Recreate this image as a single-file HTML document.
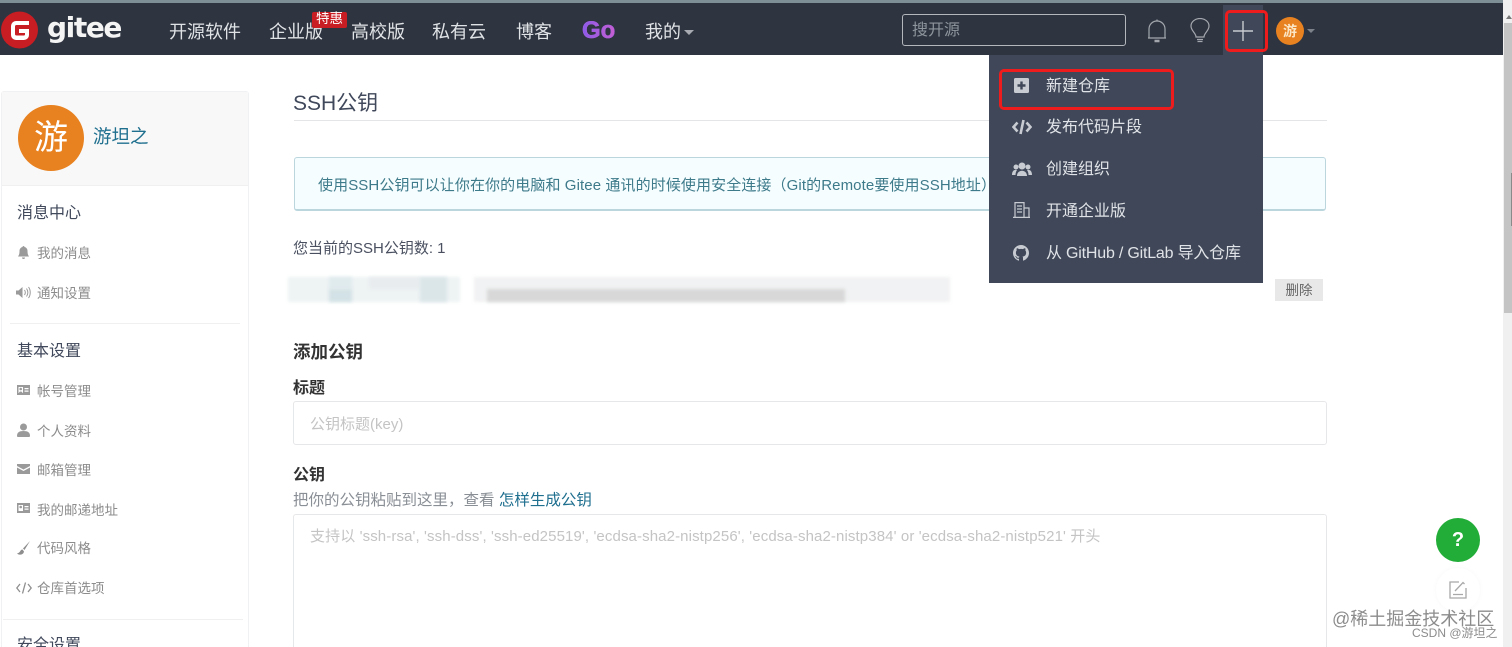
<!DOCTYPE html>
<html lang="zh"><head><meta charset="utf-8"><title>SSH公钥</title>
<style>
html,body{margin:0;padding:0;background:#fff;width:1512px;height:647px;overflow:hidden}
body{font-family:"Liberation Sans","Noto Sans CJK SC",sans-serif;color:#40485b}
#w{position:relative;width:1512px;height:647px;overflow:hidden;background:#fff}
.a{position:absolute;white-space:nowrap}
.nav{font-size:18px;line-height:24px;color:#e0e3e6;top:20px}
.dd{font-size:16px;line-height:22px;color:#e0e3e7;left:1046px}
.h{left:17px;font-size:16px;line-height:22px;color:#40485b}
.s{left:37px;font-size:13.5px;line-height:18px;color:#8c8c8c}
.ic{position:absolute}
.b{font-weight:bold;color:#333}
.bl{position:absolute;filter:blur(1.5px)}
</style></head><body><div id="w">
<div class="a" style="left:0;top:0;width:1504px;height:3px;background:#7f8f96"></div>
<div class="a" style="left:0;top:3px;width:1503px;height:52px;background:#2e3440"></div>
<div class="a" style="left:1503px;top:0;width:9px;height:647px;background:#f0f0f0"></div>
<div class="a" style="left:1504px;top:23px;width:8px;height:290px;background:#c4c4c4"></div>
<div class="a" style="left:1511px;top:173px;width:1px;height:53px;background:#8a8a8a"></div>
<div class="a" style="left:1506px;top:15px;width:0;height:0;border-left:3px solid transparent;border-right:3px solid transparent;border-bottom:4px solid #777"></div>

<svg class="ic" style="left:1px;top:11px" width="37" height="38" viewBox="0 0 37 38"><circle cx="18.5" cy="19" r="18.5" fill="#c71d23"/><path d="M10 19v-4a5 5 0 0 1 5-5h13v4H15.500a1.500 1.500 0 0 0-1.500 1.500V23a1.500 1.500 0 0 0 1.500 1.500H23a1 1 0 0 0 1-1V22h-6v-4h10v6a5 5 0 0 1-5 5h-8a5 5 0 0 1-5-5z" fill="#fff"/></svg>
<div class="a" style="left:47px;top:9px;font-size:28px;line-height:38px;font-weight:bold;color:#f4f4f4;font-family:'DejaVu Sans',sans-serif;letter-spacing:-1.4px">gitee</div>

<div class="a nav" style="left:169px">开源软件</div>
<div class="a nav" style="left:269px">企业版</div>
<div class="a" style="left:312px;top:12px;width:35px;height:16px;background:#c71d23;border-radius:2px;color:#fff;font-size:13.5px;line-height:14px;text-align:center">特惠</div>
<div class="a nav" style="left:351px">高校版</div>
<div class="a nav" style="left:432px">私有云</div>
<div class="a nav" style="left:516px">博客</div>
<div class="a" style="left:582px;top:16px;font-size:24px;line-height:30px;font-weight:bold;color:#9b5de0;background:linear-gradient(90deg,#8a5be8,#c85fd0);-webkit-background-clip:text;background-clip:text;-webkit-text-fill-color:transparent;-webkit-text-stroke:.5px #a35de0">Go</div>
<div class="a nav" style="left:645px">我的</div>
<div class="a" style="left:684px;top:30px;width:0;height:0;border-left:5px solid transparent;border-right:5px solid transparent;border-top:5px solid #a8acb2"></div>

<div class="a" style="left:902px;top:14px;width:222px;height:30px;border:1px solid #b4b8bd;border-radius:3px;color:#8f959c;font-size:16px;line-height:32px;text-indent:9px">搜开源</div>

<svg class="ic" style="left:1145px;top:18px" width="24" height="27" viewBox="0 0 24 27" fill="none" stroke="#a4a8ae" stroke-width="1.2"><path d="M4 20V11a8 8 0 0 1 16 0v9M3 20h18"/><path d="M12 1.500v2"/><path d="M9.500 23h5" stroke-width="2.5"/></svg>
<svg class="ic" style="left:1188px;top:18px" width="24" height="27" viewBox="0 0 24 27" fill="none" stroke="#a4a8ae" stroke-width="1.2"><path d="M8 19c0-4-5-6-5-11a9 7.500 0 0 1 18 0c0 5-5 7-5 11z"/><path d="M9 21.500h6M9.500 23.500h5"/></svg>

<div class="a" style="left:1223px;top:5px;width:40px;height:50px;background:#3f4758"></div>
<svg class="ic" style="left:1232px;top:20px" width="22" height="22" viewBox="0 0 22 22" stroke="#c8cbd0" stroke-width="1.4"><path d="M11 1v20M1 11h20"/></svg>
<div class="a" style="left:1276px;top:17px;width:28px;height:28px;border-radius:50%;background:#e8811f;color:#fbe6c6;font-size:14px;font-weight:bold;line-height:28px;text-align:center">游</div>
<div class="a" style="left:1307px;top:29px;width:0;height:0;border-left:4px solid transparent;border-right:4px solid transparent;border-top:4px solid #7d828a"></div>

<!-- sidebar -->
<div class="a" style="left:1px;top:91px;width:248px;height:570px;border:1px solid #f0f1f2;border-radius:3px;box-sizing:border-box;background:#fff"></div>
<div class="a" style="left:2px;top:92px;width:246px;height:93px;background:#f8f8f8;border-bottom:1px solid #f0f0f0"></div>
<div class="a" style="left:18px;top:105px;width:66px;height:66px;border-radius:50%;background:#e8811f;color:#fff;font-size:34px;line-height:66px;text-align:center">游</div>
<div class="a" style="left:93px;top:125px;font-size:18.5px;line-height:24px;color:#1f6f8f">游坦之</div>

<div class="a h" style="top:203px">消息中心</div>
<svg class="ic" style="left:17px;top:246px" width="13" height="13" viewBox="0 0 13 13" fill="#9a9a9a"><path d="M6.500 0a1 1 0 0 1 1 1c2 .5 3 2 3 4 0 3 .5 4 1.500 5.500H1C2 9 2.500 8 2.500 5c0-2 1-3.500 3-4a1 1 0 0 1 1-1zM5 11.500h3A1.500 1.500 0 0 1 5 11.500z"/></svg>
<div class="a s" style="top:245px">我的消息</div>
<svg class="ic" style="left:16px;top:286px" width="16" height="13" viewBox="0 0 16 13" fill="#9a9a9a"><path d="M0 4.500h2.500L6.500 1v11L2.500 8.500H0z"/><path d="M8.500 4c1 1.500 1 3.500 0 5M10.500 2.500c1.700 2.500 1.700 5.500 0 8M12.500 1c2.300 3 2.300 8 0 11" fill="none" stroke="#9a9a9a"/></svg>
<div class="a s" style="top:285px">通知设置</div>
<div class="a" style="left:10px;top:323px;width:230px;height:1px;background:#f0f0f0"></div>

<div class="a h" style="top:341px">基本设置</div>
<svg class="ic" style="left:17px;top:385px" width="13" height="11" viewBox="0 0 13 11"><path fill-rule="evenodd" d="M0 0h13v10H0zM1.500 2v6h4.500V2zM7.500 3v1.200h4V3zM7.500 5.500v1.200h4V5.500z" fill="#9a9a9a"/><circle cx="3.700" cy="4" r="1.300" fill="#9a9a9a"/><path d="M2 8c0-2 3.500-2 3.500 0z" fill="#9a9a9a"/></svg>
<div class="a s" style="top:383px">帐号管理</div>
<svg class="ic" style="left:17px;top:423px" width="13" height="14" viewBox="0 0 13 14" fill="#9a9a9a"><circle cx="6.500" cy="4" r="3.500"/><path d="M0 13c0-3.500 2-5 6.500-5S13 9.500 13 13c0 .6-.4 1-1 1H1c-.6 0-1-.4-1-1z"/></svg>
<div class="a s" style="top:423px">个人资料</div>
<svg class="ic" style="left:17px;top:464px" width="13" height="10" viewBox="0 0 13 10" fill="#9a9a9a"><path d="M0 0h13v2L6.500 5.500 0 2zM0 3.500l6.500 3.500L13 3.500V10H0z"/></svg>
<div class="a s" style="top:462px">邮箱管理</div>
<svg class="ic" style="left:17px;top:503px" width="13" height="11" viewBox="0 0 13 11"><path fill-rule="evenodd" d="M0 0h13v10H0zM1.500 2v6h4.500V2zM7.500 3v1.200h4V3zM7.500 5.500v1.200h4V5.500z" fill="#9a9a9a"/><circle cx="3.700" cy="4" r="1.300" fill="#9a9a9a"/></svg>
<div class="a s" style="top:502px">我的邮递地址</div>
<svg class="ic" style="left:17px;top:541px" width="13" height="14" viewBox="0 0 13 14" fill="#8e8e8e"><path d="M13 0L6 7.500 7.500 9zM5.500 8.500C3 8.500 3.500 12 0 12.500c2 2 6.500 1.500 7-2z"/></svg>
<div class="a s" style="top:540px">代码风格</div>
<svg class="ic" style="left:16px;top:582px" width="16" height="12" viewBox="0 0 16 12" fill="none" stroke="#8e8e8e" stroke-width="1.3"><path d="M4 2L.8 6 4 10M12 2l3.200 4L12 10M9.500 .5l-3 11"/></svg>
<div class="a s" style="top:580px">仓库首选项</div>
<div class="a" style="left:3px;top:619px;width:240px;height:1px;background:#f0f0f0"></div>
<div class="a h" style="top:635px">安全设置</div>

<!-- main -->
<div class="a" style="left:293px;top:89px;font-size:21px;line-height:29px;color:#40485b">SSH公钥</div>
<div class="a" style="left:294px;top:120px;width:1033px;height:1px;background:#e3e5e7"></div>
<div class="a" style="left:294px;top:157px;width:1032px;height:54px;box-sizing:border-box;background:#f6fdff;border:1px solid #bcd6de;border-bottom-width:2px;border-radius:3px;color:#3d7a8a;font-size:15px;line-height:52px;padding-top:2px;padding-left:23px;letter-spacing:.1px">使用SSH公钥可以让你在你的电脑和 Gitee 通讯的时候使用安全连接（Git的Remote要使用SSH地址）</div>
<div class="a" style="left:293px;top:239px;font-size:15px;line-height:20px;color:#4a5060">您当前的SSH公钥数: 1</div>

<!-- blurred key -->
<div class="bl" style="left:288px;top:277px;width:172px;height:25px;background:#eef3f4"></div>
<div class="bl" style="left:329px;top:277px;width:23px;height:12px;background:#e0ebee"></div>
<div class="bl" style="left:329px;top:289px;width:23px;height:13px;background:#d3e2e6"></div>
<div class="bl" style="left:369px;top:277px;width:51px;height:12px;background:#e8ecee"></div>
<div class="bl" style="left:420px;top:277px;width:27px;height:25px;background:#dbe6e9"></div>
<div class="bl" style="left:474px;top:277px;width:476px;height:25px;background:#f1f2f3"></div>
<div class="bl" style="left:487px;top:289px;width:358px;height:13px;background:#d8d8d8"></div>

<div class="a" style="left:1275px;top:279px;width:48px;height:22px;background:#e8e8e8;color:#666;font-size:13.5px;line-height:23px;text-align:center">删除</div>

<div class="a b" style="left:293px;top:341px;font-size:17.5px;line-height:22px">添加公钥</div>
<div class="a b" style="left:293px;top:379px;font-size:16px;line-height:20px">标题</div>
<div class="a" style="left:293px;top:401px;width:1034px;height:44px;box-sizing:border-box;border:1px solid #e6e7e9;border-radius:3px;color:#c4c4c4;font-size:15px;line-height:45px;padding-left:16px">公钥标题(key)</div>
<div class="a b" style="left:293px;top:466px;font-size:16px;line-height:20px">公钥</div>
<div class="a" style="left:293px;top:491px;font-size:15.5px;line-height:20px;color:#8a8f96">把你的公钥粘贴到这里，查看 <span style="color:#1f6f8f">怎样生成公钥</span></div>
<div class="a" style="left:293px;top:514px;width:1034px;height:150px;box-sizing:border-box;border:1px solid #e6e7e9;border-radius:3px;color:#c4c4c4;font-size:15px;line-height:20px;padding:12px 16px;letter-spacing:.11px">支持以 'ssh-rsa', 'ssh-dss', 'ssh-ed25519', 'ecdsa-sha2-nistp256', 'ecdsa-sha2-nistp384' or 'ecdsa-sha2-nistp521' 开头</div>

<!-- dropdown -->
<div class="a" style="left:989px;top:55px;width:274px;height:228px;background:#3f4758"></div>
<svg class="ic" style="left:1014px;top:78px" width="15" height="15" viewBox="0 0 15 15"><path fill-rule="evenodd" d="M1.500 0h12A1.500 1.500 0 0 1 15 1.500v12a1.500 1.500 0 0 1-1.500 1.500h-12A1.500 1.500 0 0 1 0 13.500v-12A1.500 1.500 0 0 1 1.500 0zM6.300 3.500v2.800H3.500v2.400h2.800v2.800h2.400V8.700h2.800V6.300H8.700V3.500z" fill="#c8ccd2"/></svg>
<div class="a dd" style="top:76px">新建仓库</div>
<svg class="ic" style="left:1012px;top:119px" width="20" height="16" viewBox="0 0 20 16" fill="none" stroke="#c8ccd2" stroke-width="2.6"><path d="M5.500 3.500L1.500 8l4 4.500M14.500 3.500l4 4.500-4 4.500M11.500 1L8.500 15"/></svg>
<div class="a dd" style="top:117px">发布代码片段</div>
<svg class="ic" style="left:1012px;top:162px" width="20" height="14" viewBox="0 0 20 14" fill="#c8ccd2"><circle cx="10" cy="4" r="3.500"/><circle cx="4" cy="5" r="2.500"/><circle cx="16" cy="5" r="2.500"/><path d="M5 14c0-7 10-7 10 0zM0 13c0-5 3-5.500 5-5-1 1.500-1.500 3-1.500 5zM20 13c0-5-3-5.500-5-5 1 1.500 1.500 3 1.500 5z"/></svg>
<div class="a dd" style="top:159px">创建组织</div>
<svg class="ic" style="left:1013px;top:202px" width="17" height="16" viewBox="0 0 17 16" fill="none" stroke="#c8ccd2" stroke-width="1.2"><path d="M2 .6h9v14.800H2zM11 6h5v9.400h-5M0 15.400h17M4 4h5M4 7h5M4 10h5"/></svg>
<div class="a dd" style="top:201px">开通企业版</div>
<svg class="ic" style="left:1013px;top:245px" width="16" height="16" viewBox="0 0 16 16" fill="#c8ccd2"><path d="M8 0C3.580 0 0 3.580 0 8c0 3.540 2.290 6.530 5.470 7.590.4.070.55-.17.550-.38 0-.19-.01-.82-.01-1.490-2.010.37-2.530-.49-2.690-.94-.09-.23-.48-.94-.82-1.130-.28-.15-.68-.52-.01-.53.630-.01 1.080.58 1.230.82.720 1.210 1.870.87 2.330.66.070-.52.280-.87.510-1.070-1.780-.2-3.640-.89-3.640-3.950 0-.87.310-1.590.820-2.150-.08-.2-.36-1.020.08-2.120 0 0 .67-.21 2.200.82.640-.18 1.320-.27 2-.27s1.360.09 2 .27c1.530-1.040 2.200-.82 2.200-.82.440 1.100.16 1.920.08 2.120.51.560.82 1.270.82 2.150 0 3.070-1.870 3.750-3.650 3.950.29.250.54.730.54 1.480 0 1.070-.01 1.930-.01 2.200 0 .21.150.46.550.38A8.010 8.010 0 0 0 16 8c0-4.420-3.580-8-8-8z"/></svg>
<div class="a dd" style="top:243px;letter-spacing:-.2px">从 GitHub / GitLab 导入仓库</div>

<!-- annotations -->
<div class="a" style="left:1225px;top:10px;width:43px;height:42px;box-sizing:border-box;border:3px solid #ee1c1c;border-radius:5px"></div>
<div class="a" style="left:999px;top:69px;width:175px;height:41px;box-sizing:border-box;border:3px solid #ee1c1c;border-radius:5px"></div>

<!-- floating -->
<div class="a" style="left:1436px;top:518px;width:44px;height:44px;border-radius:50%;background:#22ac38;color:#fff;font-size:20px;font-weight:bold;line-height:44px;text-align:center">?</div>
<div class="a" style="left:1436px;top:568px;width:44px;height:44px;border-radius:50%;background:#fff;box-shadow:0 0 6px rgba(0,0,0,.03)"></div>
<svg class="ic" style="left:1449px;top:581px" width="19" height="18" viewBox="0 0 19 18" fill="none" stroke="#a8a8a8" stroke-width="1.3"><path d="M10 1H1v16h16V7M4 13.500h10M6 10l8-8.500 1.500 1.500"/></svg>
<div class="a" style="left:1332px;top:607px;font-size:18px;line-height:24px;color:#8c8c8c">@稀土掘金技术社区</div>
<div class="a" style="left:1412px;top:625px;font-size:12px;line-height:16px;color:#8c8c8c">CSDN @游坦之</div>
</div></body></html>
